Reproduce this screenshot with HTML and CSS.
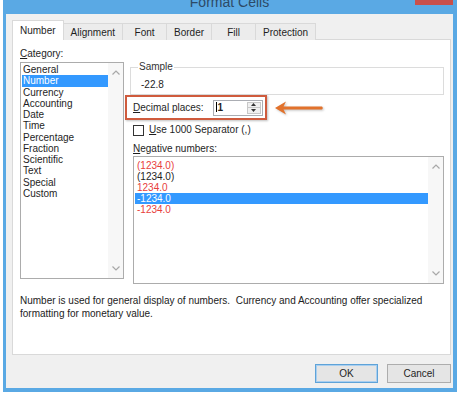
FILE: index.html
```html
<!DOCTYPE html>
<html lang="en">

<head>
    <meta charset="UTF-8">
    <meta name="viewport" content="width=device-width, initial-scale=1.0">
    <title>Format Cells</title>
    <link rel="stylesheet" href="styles.css">
</head>

<body>
    <div class="window">
        <!-- Barra de título -->
        <div class="titlebar">
            <span></span>
            <span class="title">Format Cells</span>
            <span class="close"></span>
        </div>

        <div class="dialog-body">
            <!-- Pestañas -->
            <div class="tabs">
                <div class="tab active">Number</div>
                <div class="tab">Alignment</div>
                <div class="tab">Font</div>
                <div class="tab">Border</div>
                <div class="tab">Fill</div>
                <div class="tab">Protection</div>
            </div>

            <div class="panel">
                <div class="columns">
                    <!-- Categorías -->
                    <div class="category">
                        <div class="label"><u>C</u>ategory:</div>
                        <div class="listbox cat-list">
                            <ul class="items">
                                <li>General</li>
                                <li class="selected">Number</li>
                                <li>Currency</li>
                                <li>Accounting</li>
                                <li>Date</li>
                                <li>Time</li>
                                <li>Percentage</li>
                                <li>Fraction</li>
                                <li>Scientific</li>
                                <li>Text</li>
                                <li>Special</li>
                                <li>Custom</li>
                            </ul>
                            <div class="scrollbar">
                                <svg width="8" height="5" viewBox="0 0 8 5"><path d="M0.5 4.5 L4 1 L7.5 4.5" fill="none" stroke="#a8a8a8" stroke-width="1.2"/></svg>
                                <svg width="8" height="5" viewBox="0 0 8 5"><path d="M0.5 0.5 L4 4 L7.5 0.5" fill="none" stroke="#a8a8a8" stroke-width="1.2"/></svg>
                            </div>
                        </div>
                    </div>

                    <!-- Opciones de número -->
                    <div class="options">
                        <fieldset class="sample">
                            <legend>Sample</legend>
                            <div class="sample-value">-22.8</div>
                        </fieldset>

                        <div class="decimal-row">
                            <div class="decimal-box">
                                <span><u>D</u>ecimal places:</span>
                                <div class="spin">
                                    <span class="spin-value">1</span>
                                    <span class="spin-buttons">
                                        <span class="spin-btn"><svg width="5" height="3" viewBox="0 0 5 3"><path d="M0 3 L2.5 0 L5 3 Z" fill="#333"/></svg></span>
                                        <span class="spin-btn"><svg width="5" height="3" viewBox="0 0 5 3"><path d="M0 0 L2.5 3 L5 0 Z" fill="#333"/></svg></span>
                                    </span>
                                </div>
                            </div>
                            <svg class="arrow" width="50" height="16" viewBox="0 0 50 16">
                                <path d="M0 8 L11 1.5 L8.5 6.6 L47 6.6 Q48.5 8 47 9.4 L8.5 9.4 L11 14.5 Z" fill="#e2722c"/>
                            </svg>
                        </div>

                        <div class="check-row">
                            <span class="checkbox"></span>
                            <span><u>U</u>se 1000 Separator (,)</span>
                        </div>

                        <div class="label neg-label"><u>N</u>egative numbers:</div>
                        <div class="listbox neg-list">
                            <ul class="items">
                                <li class="red">(1234.0)</li>
                                <li>(1234.0)</li>
                                <li class="red">1234.0</li>
                                <li class="selected">-1234.0</li>
                                <li class="red">-1234.0</li>
                            </ul>
                            <div class="scrollbar">
                                <svg width="8" height="5" viewBox="0 0 8 5"><path d="M0.5 4.5 L4 1 L7.5 4.5" fill="none" stroke="#a8a8a8" stroke-width="1.2"/></svg>
                                <svg width="8" height="5" viewBox="0 0 8 5"><path d="M0.5 0.5 L4 4 L7.5 0.5" fill="none" stroke="#a8a8a8" stroke-width="1.2"/></svg>
                            </div>
                        </div>
                    </div>
                </div>

                <p class="description">Number is used for general display of numbers.&nbsp; Currency and Accounting offer specialized formatting for monetary value.</p>
            </div>

            <!-- Botones -->
            <div class="actions">
                <button class="default">OK</button>
                <button>Cancel</button>
            </div>
        </div>
    </div>
</body>

</html>
```

FILE: styles.css
```css
body {
    margin: 0;
    background: #fff;
    font-family: "Liberation Sans", Arial, sans-serif;
    font-size: 10px;
    color: #1e1e1e;
}

.window {
    width: 447px;
    margin-left: 3px;
    border: solid #5aa9e4;
    border-width: 0 4px 4px 3px;
    background: #f0f0f0;
}

.titlebar {
    display: grid;
    grid-template-columns: 1fr auto 1fr;
    height: 14px;
    overflow: hidden;
    background: #5aa9e4;
}

.title {
    font-size: 14px;
    line-height: 14px;
    margin-top: -5px;
    color: #2d4a66;
}

.close {
    justify-self: end;
    width: 38px;
    height: 5px;
    background: #c9504b;
}

.dialog-body {
    padding: 6px 2px 5px 6px;
}

/* Pestañas */
.tabs {
    display: flex;
    align-items: flex-end;
    margin-bottom: -1px;
}

.tab {
    min-width: 45px;
    height: 17px;
    line-height: 17px;
    padding: 0 7px;
    box-sizing: border-box;
    text-align: center;
    border: 1px solid #d9d9d9;
    border-bottom: none;
    margin-right: -1px;
    background: #ececec;
}

.tab.active {
    position: relative;
    z-index: 1;
    height: 20px;
    line-height: 19px;
    background: #fff;
}

.panel {
    height: 316px;
    box-sizing: border-box;
    padding: 8px 6px 0 7px;
    background: #fff;
    border: 1px solid #d9d9d9;
}

.columns {
    display: flex;
    gap: 6px;
}

.label {
    line-height: 12px;
}

.category {
    width: 104px;
}

/* Listas */
.listbox {
    display: flex;
    box-sizing: border-box;
    border: 1px solid #acacac;
    background: #fff;
}

.cat-list {
    height: 217px;
    margin-top: 2px;
}

.items {
    flex: 1;
    list-style: none;
    margin: 0;
    padding: 1px 0 0 1px;
}

.cat-list .items li {
    line-height: 11.25px;
    padding-left: 1px;
}

.items li.selected {
    background: #3399ff;
    color: #fff;
}

.items li.red {
    color: #e8403c;
}

.scrollbar {
    width: 15px;
    display: flex;
    flex-direction: column;
    align-items: center;
    justify-content: space-between;
    padding: 7px 0;
    background: #f7f7f7;
}

.options {
    flex: 1;
}

.sample {
    margin: 13px 0 0;
    padding: 0 8px 3px 7px;
    border: 1px solid #dcdcdc;
}

.sample legend {
    padding: 0 1px;
    line-height: 12px;
    color: #333;
}

.sample-value {
    margin-top: 6px;
    padding-left: 3px;
    line-height: 12px;
}

/* Decimales */
.decimal-row {
    display: flex;
    align-items: center;
    margin-left: -5px;
}

.decimal-box {
    display: flex;
    align-items: center;
    gap: 9px;
    width: 142px;
    height: 25px;
    box-sizing: border-box;
    padding-left: 6px;
    border: 2px solid #cf5b3d;
    box-shadow: 1px 1px 2px rgba(0, 0, 0, 0.25);
}

.spin {
    display: flex;
    width: 50px;
    height: 16px;
    box-sizing: border-box;
    border: 1px solid #abadb3;
    background: #fff;
}

.spin-value {
    flex: 1;
    line-height: 14px;
    padding-left: 2px;
    font-weight: bold;
}

.spin-value::before {
    content: "";
    display: inline-block;
    width: 1px;
    height: 10px;
    margin-right: 1px;
    vertical-align: -1px;
    background: #000;
}

.spin-buttons {
    display: flex;
    flex-direction: column;
    width: 12px;
    margin: 1px;
    border: 1px solid #c8c8c8;
    background: #f0f0f0;
}

.spin-btn {
    flex: 1;
    display: flex;
    align-items: center;
    justify-content: center;
}

.spin-btn + .spin-btn {
    border-top: 1px solid #c8c8c8;
}

.arrow {
    margin-left: 8px;
    filter: drop-shadow(1px 1px 1px rgba(0, 0, 0, 0.25));
}

.check-row {
    display: flex;
    align-items: center;
    gap: 5px;
    margin: 4px 0 0 3px;
    line-height: 12px;
}

.checkbox {
    width: 11px;
    height: 11px;
    box-sizing: border-box;
    border: 1px solid #333;
    background: #fff;
}

.neg-label {
    margin: 7px 0 0 3px;
}

.neg-list {
    height: 128px;
    margin: 1px 0 0 3px;
}

.neg-list .items {
    padding: 3px 0 0 1px;
}

.neg-list .items li {
    line-height: 11px;
    padding-left: 2px;
}

.description {
    margin: 10px 0 0;
    line-height: 13px;
    color: #222;
}

/* Botones de acción */
.actions {
    display: flex;
    justify-content: flex-end;
    gap: 9px;
    margin-top: 9px;
}

.actions button {
    width: 64px;
    height: 19px;
    padding: 0;
    font-family: inherit;
    font-size: 10px;
    color: #1e1e1e;
    background: #e5e5e5;
    border: 1px solid #adadad;
}

.actions button.default {
    width: 63px;
    border-color: #5fa3d8;
    box-shadow: inset 0 0 0 1px #a9cff0;
}
```
